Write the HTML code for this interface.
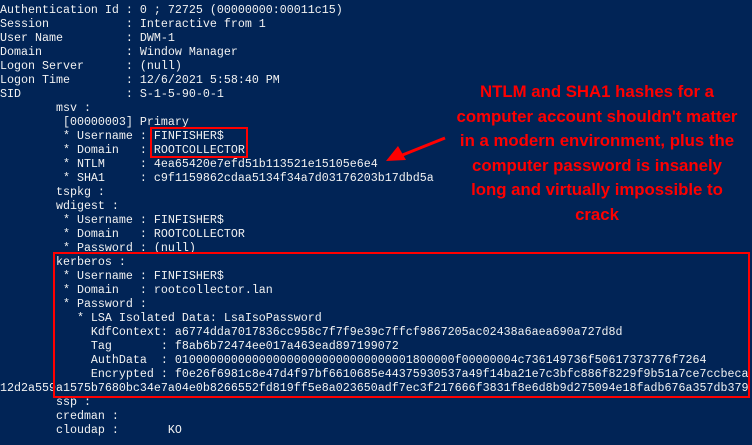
<!DOCTYPE html>
<html><head><meta charset="utf-8"><style>
html,body{margin:0;padding:0;background:#012456;width:752px;height:445px;overflow:hidden;position:relative}
.t{position:absolute;left:0;top:3px;font-family:"Liberation Mono",monospace;font-size:11.67px;line-height:14px;color:#f2f2f2;white-space:pre}
.box{position:absolute;border:2px solid #f00;box-sizing:border-box}
.note{position:absolute;left:427px;width:340px;top:80px;text-align:center;font-family:"Liberation Sans",sans-serif;font-weight:bold;font-size:16.8px;line-height:24.5px;color:#f00;}
</style></head><body>
<div class="t">Authentication Id : 0 ; 72725 (00000000:00011c15)
Session           : Interactive from 1
User Name         : DWM-1
Domain            : Window Manager
Logon Server      : (null)
Logon Time        : 12/6/2021 5:58:40 PM
SID               : S-1-5-90-0-1
        msv :
         [00000003] Primary
         * Username : FINFISHER$
         * Domain   : ROOTCOLLECTOR
         * NTLM     : 4ea65420e7efd51b113521e15105e6e4
         * SHA1     : c9f1159862cdaa5134f34a7d03176203b17dbd5a
        tspkg :
        wdigest :
         * Username : FINFISHER$
         * Domain   : ROOTCOLLECTOR
         * Password : (null)
        kerberos :
         * Username : FINFISHER$
         * Domain   : rootcollector.lan
         * Password :
           * LSA Isolated Data: LsaIsoPassword
             KdfContext: a6774dda7017836cc958c7f7f9e39c7ffcf9867205ac02438a6aea690a727d8d
             Tag       : f8ab6b72474ee017a463ead897199072
             AuthData  : 0100000000000000000000000000000001800000f00000004c736149736f50617373776f7264
             Encrypted : f0e26f6981c8e47d4f97bf6610685e44375930537a49f14ba21e7c3bfc886f8229f9b51a7ce7ccbeca
12d2a559a1575b7680bc34e7a04e0b8266552fd819ff5e8a023650adf7ec3f217666f3831f8e6d8b9d275094e18fadb676a357db379
        ssp :
        credman :
        cloudap :       KO</div>
<div class="box" style="left:150px;top:127px;width:98px;height:31px"></div>
<div class="box" style="left:53px;top:252px;width:697px;height:146px"></div>
<svg style="position:absolute;left:0;top:0" width="752" height="445">
<line x1="445" y1="138" x2="400" y2="156" stroke="#f00" stroke-width="3"/>
<polygon points="386,161 398,146 406,160" fill="#f00"/>
</svg>
<div class="note">NTLM and SHA1 hashes for a<br>computer account shouldn't matter<br>in a modern environment, plus the<br>computer password is insanely<br>long and virtually impossible to<br>crack</div>
</body></html>
